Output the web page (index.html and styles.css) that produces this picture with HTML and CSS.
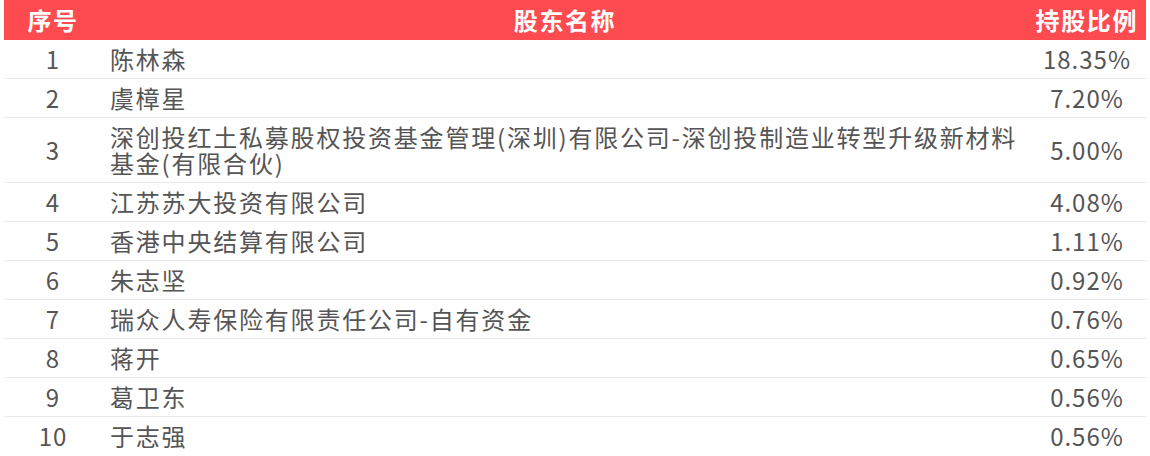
FILE: index.html
```html
<!DOCTYPE html>
<html lang="zh-CN">
<head>
<meta charset="utf-8">
<link rel="stylesheet" href="styles.css">
</head>
<body>
<table class="holders">
  <colgroup>
    <col class="c-no">
    <col class="c-name">
    <col class="c-ratio">
  </colgroup>
  <thead>
    <tr><th class="no">序号</th><th class="name-h">股东名称</th><th class="ratio">持股比例</th></tr>
  </thead>
  <tbody>
    <tr><td class="no">1</td><td class="name">陈林森</td><td class="ratio">18.35%</td></tr>
    <tr><td class="no">2</td><td class="name">虞樟星</td><td class="ratio">7.20%</td></tr>
    <tr><td class="no">3</td><td class="name">深创投红土私募股权投资基金管理(深圳)有限公司-深创投制造业转型升级新材料基金(有限合伙)</td><td class="ratio">5.00%</td></tr>
    <tr><td class="no">4</td><td class="name">江苏苏大投资有限公司</td><td class="ratio">4.08%</td></tr>
    <tr><td class="no">5</td><td class="name">香港中央结算有限公司</td><td class="ratio">1.11%</td></tr>
    <tr><td class="no">6</td><td class="name">朱志坚</td><td class="ratio">0.92%</td></tr>
    <tr><td class="no">7</td><td class="name">瑞众人寿保险有限责任公司-自有资金</td><td class="ratio">0.76%</td></tr>
    <tr><td class="no">8</td><td class="name">蒋开</td><td class="ratio">0.65%</td></tr>
    <tr><td class="no">9</td><td class="name">葛卫东</td><td class="ratio">0.56%</td></tr>
    <tr><td class="no">10</td><td class="name">于志强</td><td class="ratio">0.56%</td></tr>
  </tbody>
</table>
</body>
</html>
```

FILE: styles.css
```css
html, body {
  margin: 0;
  padding: 0;
  background: #ffffff;
}
body {
  padding: 0 4px;
  font-family: "Noto Sans CJK SC", "Noto Sans", sans-serif;
}
.holders {
  width: 1142px;
  border-collapse: collapse;
  table-layout: fixed;
  font-size: 24px;
  letter-spacing: 1px;
  color: #555555;
}
.c-no { width: 98px; }
.c-ratio { width: 118px; }
.holders thead th {
  background: #fe4b4f;
  color: #ffffff;
  font-weight: 700;
  height: 40px;
  padding: 0;
  line-height: 40px;
  letter-spacing: 1.6px;
}
.holders th.no { text-align: center; }
.holders th.name-h { text-align: center; }
.holders th.ratio { text-align: right; padding-right: 8px; }
.holders tbody td {
  padding: 6px 0;
  line-height: 26px;
  border-bottom: 1px solid #e8e8ee;
  vertical-align: middle;
}
.holders tbody tr:last-child td { border-bottom: none; }
.holders td.no { text-align: center; }
.holders td.name {
  text-align: left;
  padding-left: 8px;
  padding-right: 6px;
  letter-spacing: 1.8px;
}
.holders td.ratio { text-align: center; }
```
